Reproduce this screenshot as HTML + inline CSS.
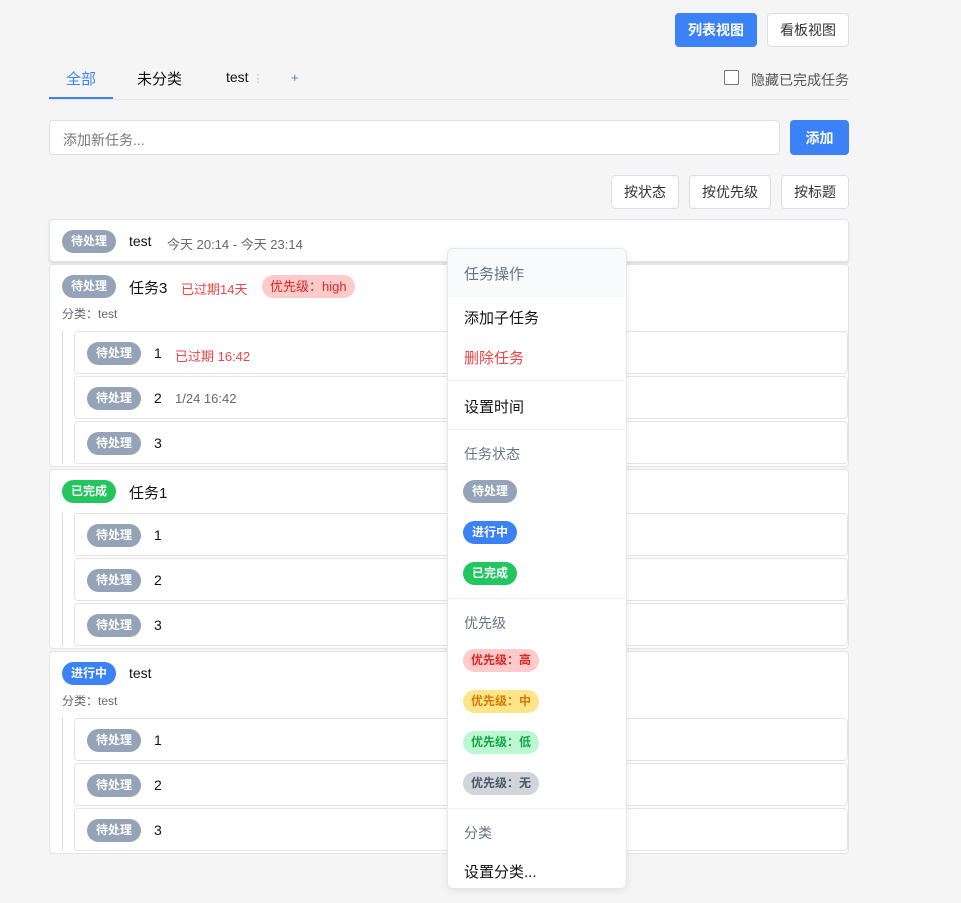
<!DOCTYPE html>
<html><head><meta charset="utf-8"><style>
*{box-sizing:border-box;margin:0;padding:0}
body{width:961px;height:903px;background:#f5f5f5;font-family:"Liberation Sans","Noto Sans CJK SC",sans-serif;position:relative;overflow:hidden;color:#111}
.a{position:absolute}
.btn{position:absolute;height:34px;border:1px solid #dcdfe6;border-radius:4px;background:#fff;font-size:14px;color:#333;display:flex;align-items:center;justify-content:center}
.card{position:absolute;left:49px;width:800px;background:#fff;border:1px solid #e2e4e8;border-radius:4px}
.sub{position:absolute;left:74px;width:774px;height:43px;background:#fff;border:1px solid #e2e4e8;border-radius:4px}
.bd{position:absolute;height:23px;border-radius:12px;font-size:12px;font-weight:bold;color:#fff;padding:0 9px;line-height:23px;white-space:nowrap}
.g{background:#94a3b8}.b{background:#3b82f6}.gr{background:#22c55e}
.p{padding:0 10px;font-weight:normal}
.q{padding:0 8px}
.t{position:absolute;font-size:15px;white-space:nowrap}
.s{position:absolute;font-size:13px;white-space:nowrap}
.vl{position:absolute;left:62px;width:1px;background:#ddd}
.mi{position:absolute;left:464px;font-size:15px;white-space:nowrap}
.mh{position:absolute;left:464px;font-size:14px;color:#6b7280}
.dv{position:absolute;left:447px;width:180px;height:1px;background:#eef0f2}
</style></head><body>
<div class="btn" style="left:675px;top:13px;width:82px;background:#3b82f6;border-color:#3b82f6;color:#fff;font-weight:bold">列表视图</div>
<div class="btn" style="left:767px;top:13px;width:82px">看板视图</div>
<div class="t" style="left:66px;top:68px;color:#3b82f6">全部</div>
<div class="t" style="left:137px;top:68px">未分类</div>
<div class="t" style="left:226px;top:69px;font-size:14px">test <span style="color:#bbb;font-size:11px">⋮</span></div>
<div class="s" style="left:291px;top:70px;color:#6b7a99">+</div>
<div class="a" style="left:49px;top:99px;width:800px;height:1px;background:#e2e4e8"></div>
<div class="a" style="left:49px;top:97px;width:64px;height:2px;background:#3b82f6"></div>
<div class="a" style="left:724px;top:70px;width:15px;height:15px;border:1px solid #777;border-radius:2px;background:#fff"></div>
<div class="s" style="left:751px;top:70px;font-size:14px;color:#555">隐藏已完成任务</div>
<div class="a" style="left:49px;top:120px;width:731px;height:35px;background:#fff;border:1px solid #dcdfe6;border-radius:4px;font-size:14px;color:#777;padding:9px 13px">添加新任务...</div>
<div class="btn" style="left:790px;top:120px;width:59px;height:35px;background:#3b82f6;border-color:#3b82f6;color:#fff;font-weight:bold">添加</div>
<div class="btn" style="left:611px;top:175px;width:68px">按状态</div>
<div class="btn" style="left:689px;top:175px;width:82px">按优先级</div>
<div class="btn" style="left:781px;top:175px;width:68px">按标题</div>

<div class="card" style="top:219px;height:43px;box-shadow:0 2px 2px #ddd"></div>
<div class="bd g" style="left:62px;top:230px">待处理</div>
<div class="t" style="left:129px;top:233px;font-size:14px">test</div>
<div class="s" style="left:167px;top:234px;color:#667">今天 20:14 - 今天 23:14</div>

<div class="card" style="top:264px;height:203px"></div>
<div class="bd g" style="left:62px;top:275px">待处理</div>
<div class="t" style="left:129px;top:277px">任务3</div>
<div class="s" style="left:181px;top:279px;color:#ef4444">已过期14天</div>
<div class="bd p" style="left:262px;top:275px;background:#fecaca;color:#dc2626;font-size:13px;padding:0 8px">优先级：high</div>
<div class="s" style="left:62px;top:305px;font-size:12px;color:#667">分类：test</div>
<div class="vl" style="top:331px;height:133px"></div>
<div class="sub" style="top:331px"></div><div class="bd g" style="left:87px;top:342px">待处理</div><div class="t" style="left:154px;top:345px;font-size:14px">1</div><div class="s" style="left:175px;top:346px;color:#ef4444">已过期 16:42</div>
<div class="sub" style="top:376px"></div><div class="bd g" style="left:87px;top:387px">待处理</div><div class="t" style="left:154px;top:390px;font-size:14px">2</div><div class="s" style="left:175px;top:391px;color:#667">1/24 16:42</div>
<div class="sub" style="top:421px"></div><div class="bd g" style="left:87px;top:432px">待处理</div><div class="t" style="left:154px;top:435px;font-size:14px">3</div>

<div class="card" style="top:469px;height:180px"></div>
<div class="bd gr" style="left:62px;top:480px">已完成</div>
<div class="t" style="left:129px;top:482px">任务1</div>
<div class="vl" style="top:513px;height:133px"></div>
<div class="sub" style="top:513px"></div><div class="bd g" style="left:87px;top:524px">待处理</div><div class="t" style="left:154px;top:527px;font-size:14px">1</div>
<div class="sub" style="top:558px"></div><div class="bd g" style="left:87px;top:569px">待处理</div><div class="t" style="left:154px;top:572px;font-size:14px">2</div>
<div class="sub" style="top:603px"></div><div class="bd g" style="left:87px;top:614px">待处理</div><div class="t" style="left:154px;top:617px;font-size:14px">3</div>

<div class="card" style="top:651px;height:203px"></div>
<div class="bd b" style="left:62px;top:662px">进行中</div>
<div class="t" style="left:129px;top:665px;font-size:14px">test</div>
<div class="s" style="left:62px;top:692px;font-size:12px;color:#667">分类：test</div>
<div class="vl" style="top:718px;height:133px"></div>
<div class="sub" style="top:718px"></div><div class="bd g" style="left:87px;top:729px">待处理</div><div class="t" style="left:154px;top:732px;font-size:14px">1</div>
<div class="sub" style="top:763px"></div><div class="bd g" style="left:87px;top:774px">待处理</div><div class="t" style="left:154px;top:777px;font-size:14px">2</div>
<div class="sub" style="top:808px"></div><div class="bd g" style="left:87px;top:819px">待处理</div><div class="t" style="left:154px;top:822px;font-size:14px">3</div>

<div class="a" style="left:447px;top:248px;width:180px;height:641px;background:#fff;border:1px solid #e5e7eb;border-radius:6px;box-shadow:0 2px 8px rgba(0,0,0,.08);overflow:hidden"><div style="height:48px;background:#f8fafc"></div></div>
<div class="mi" style="top:263px;color:#6b7280">任务操作</div>
<div class="mi" style="top:307px">添加子任务</div>
<div class="mi" style="top:347px;color:#ef4444">删除任务</div>
<div class="dv" style="top:380px"></div>
<div class="mi" style="top:396px">设置时间</div>
<div class="dv" style="top:429px"></div>
<div class="mh" style="top:444px">任务状态</div>
<div class="bd g" style="left:463px;top:480px">待处理</div>
<div class="bd b" style="left:463px;top:521px">进行中</div>
<div class="bd gr" style="left:463px;top:562px">已完成</div>
<div class="dv" style="top:598px"></div>
<div class="mh" style="top:613px">优先级</div>
<div class="bd q" style="left:463px;top:649px;background:#fecaca;color:#dc2626">优先级：高</div>
<div class="bd q" style="left:463px;top:690px;background:#fde68a;color:#d97706">优先级：中</div>
<div class="bd q" style="left:463px;top:731px;background:#bbf7d0;color:#16a34a">优先级：低</div>
<div class="bd q" style="left:463px;top:772px;background:#d1d5db;color:#4b5563">优先级：无</div>
<div class="dv" style="top:808px"></div>
<div class="mh" style="top:823px">分类</div>
<div class="mi" style="top:861px">设置分类...</div>
</body></html>
